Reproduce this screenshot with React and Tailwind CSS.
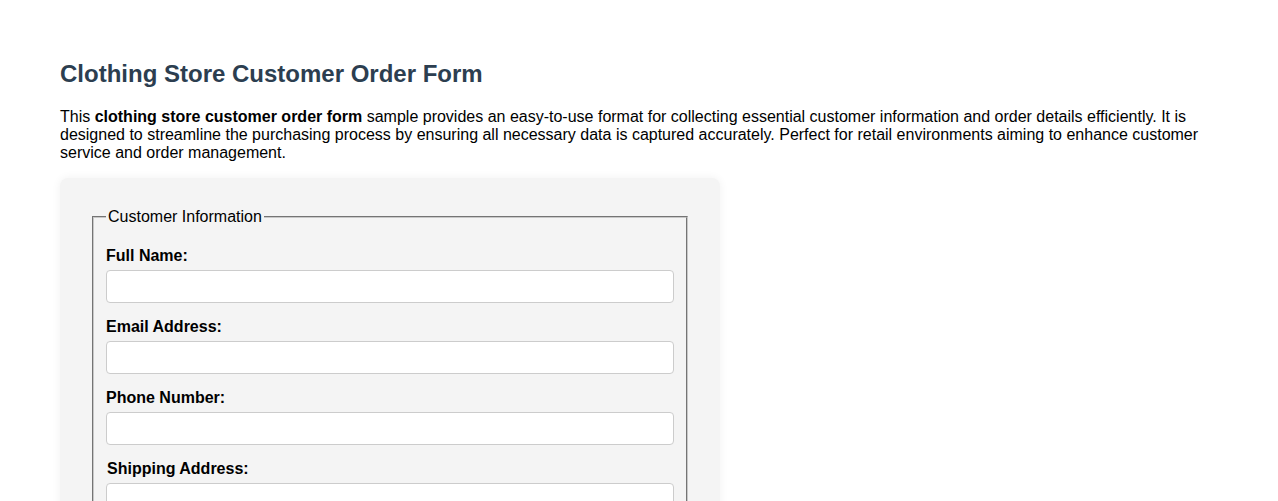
import { useState } from 'react';

const fields = [
  { id: 'fullName', label: 'Full Name:', type: 'text' },
  { id: 'email', label: 'Email Address:', type: 'email' },
  { id: 'phone', label: 'Phone Number:', type: 'tel' },
  { id: 'address', label: 'Shipping Address:', type: 'text', nudge: true },
];

export default function App() {
  const [values, setValues] = useState({});

  const handleChange = (id) => (e) => {
    setValues({ ...values, [id]: e.target.value });
  };

  return (
    <div className="min-h-screen bg-white px-[60px] pt-[60px] font-['Liberation_Sans',Arial,sans-serif] text-black">
      <h2 className="mb-[20px] text-[24px] font-bold leading-[28px] text-[#2c3e50]">
        Clothing Store Customer Order Form
      </h2>
      <p className="mb-[16px] text-[16px] leading-[18px]">
        This <strong>clothing store customer order form</strong> sample provides an easy-to-use format for collecting essential customer information and order details efficiently. It is designed to streamline the purchasing process by ensuring all necessary data is captured accurately. Perfect for retail environments aiming to enhance customer service and order management.
      </p>

      <form
        className="w-[660px] rounded-lg bg-[#f4f4f4] p-[30px] shadow-[0_0_10px_rgba(0,0,0,0.06)]"
        onSubmit={(e) => e.preventDefault()}
      >
        <fieldset className="mx-[2px] border-2 border-[rgb(200,200,200)] px-[12px] pb-[10px] pt-[21px] [border-style:groove]">
          <legend className="px-[2px] text-[16px] leading-[18px]">Customer Information</legend>
          {fields.map((f) => (
            <div key={f.id}>
              <label
                htmlFor={f.id}
                className={`mb-[5px] block text-[16px] font-bold leading-[18px] ${f.nudge ? 'pl-px' : ''}`}
              >
                {f.label}
              </label>
              <input
                id={f.id}
                type={f.type}
                value={values[f.id] || ''}
                onChange={handleChange(f.id)}
                className="mb-[15px] block h-[33px] w-full rounded border border-[#ccc] bg-white px-2 text-[16px] outline-none"
              />
            </div>
          ))}
        </fieldset>
      </form>
    </div>
  );
}
